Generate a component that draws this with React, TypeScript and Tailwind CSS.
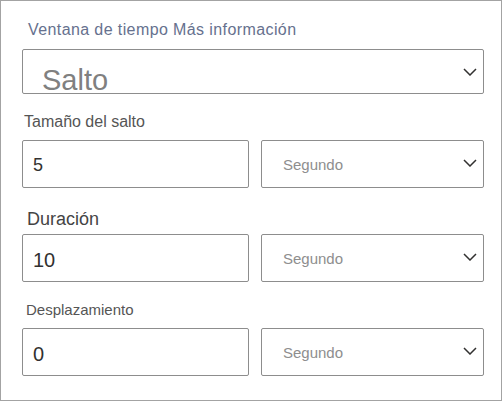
const font = { fontFamily: '"Liberation Sans", Arial, sans-serif' };

function Chevron() {
  return (
    <svg width="14" height="8" viewBox="0 0 14 8" fill="none" className="shrink-0">
      <path d="M1 1 L7 7 L13 1" stroke="#323130" strokeWidth="1.5" strokeLinejoin="miter" />
    </svg>
  );
}

function UnitSelect({ label }: { label: string }) {
  return (
    <div className="flex h-[48px] w-[223px] items-center justify-between rounded-[2px] border border-[#8d8d8d] pl-[21px] pr-[6px]">
      <span className="text-[15px] leading-[15px] text-[#8e8e8e]">{label}</span>
      <span className="-mt-[3px]">
        <Chevron />
      </span>
    </div>
  );
}

function Row({ value, size }: { value: string; size: "sm" | "lg" }) {
  return (
    <div className="flex gap-[12px]">
      <div className="flex h-[48px] w-[227px] items-center rounded-[2px] border border-[#8d8d8d] pl-[10px]">
        {size === "sm" ? (
          <span className="pt-[2px] text-[18px] leading-[18px] text-[#323130]">{value}</span>
        ) : (
          <span className="pt-[4px] text-[20px] leading-[20px] text-[#323130]">{value}</span>
        )}
      </div>
      <UnitSelect label="Segundo" />
    </div>
  );
}

export default function App() {
  return (
    <div className="h-[402px] w-[503px] bg-white" style={font}>
      <div className="flex h-[401px] w-[502px] flex-col border border-[#a3a3a3] pl-[21px] pt-[21px]">
        <div className="pl-[6px] text-[16px] leading-[16px] tracking-[0.4px] text-[#66718e]">
          Ventana de tiempo Más información
        </div>

        <div className="mt-[11px] flex h-[45px] w-[462px] items-start justify-between rounded-[2px] border border-[#8d8d8d] pl-[19px] pr-[6px] pt-[19px]">
          <span className="text-[29px] leading-[22px] text-[#808080]">Salto</span>
          <span className="-mt-[1px]">
            <Chevron />
          </span>
        </div>

        <div className="mt-[20px] pl-[2px] text-[16px] leading-[16px] text-[#555555]">
          Tamaño del salto
        </div>
        <div className="mt-[10px]">
          <Row value="5" size="sm" />
        </div>

        <div className="mt-[22px] pl-[5px] text-[18px] leading-[18px] text-[#444444]">
          Duración
        </div>
        <div className="mt-[6px]">
          <Row value="10" size="lg" />
        </div>

        <div className="mt-[20px] pl-[4px] text-[15px] leading-[15px] text-[#555555]">
          Desplazamiento
        </div>
        <div className="mt-[11px]">
          <Row value="0" size="lg" />
        </div>
      </div>
    </div>
  );
}
